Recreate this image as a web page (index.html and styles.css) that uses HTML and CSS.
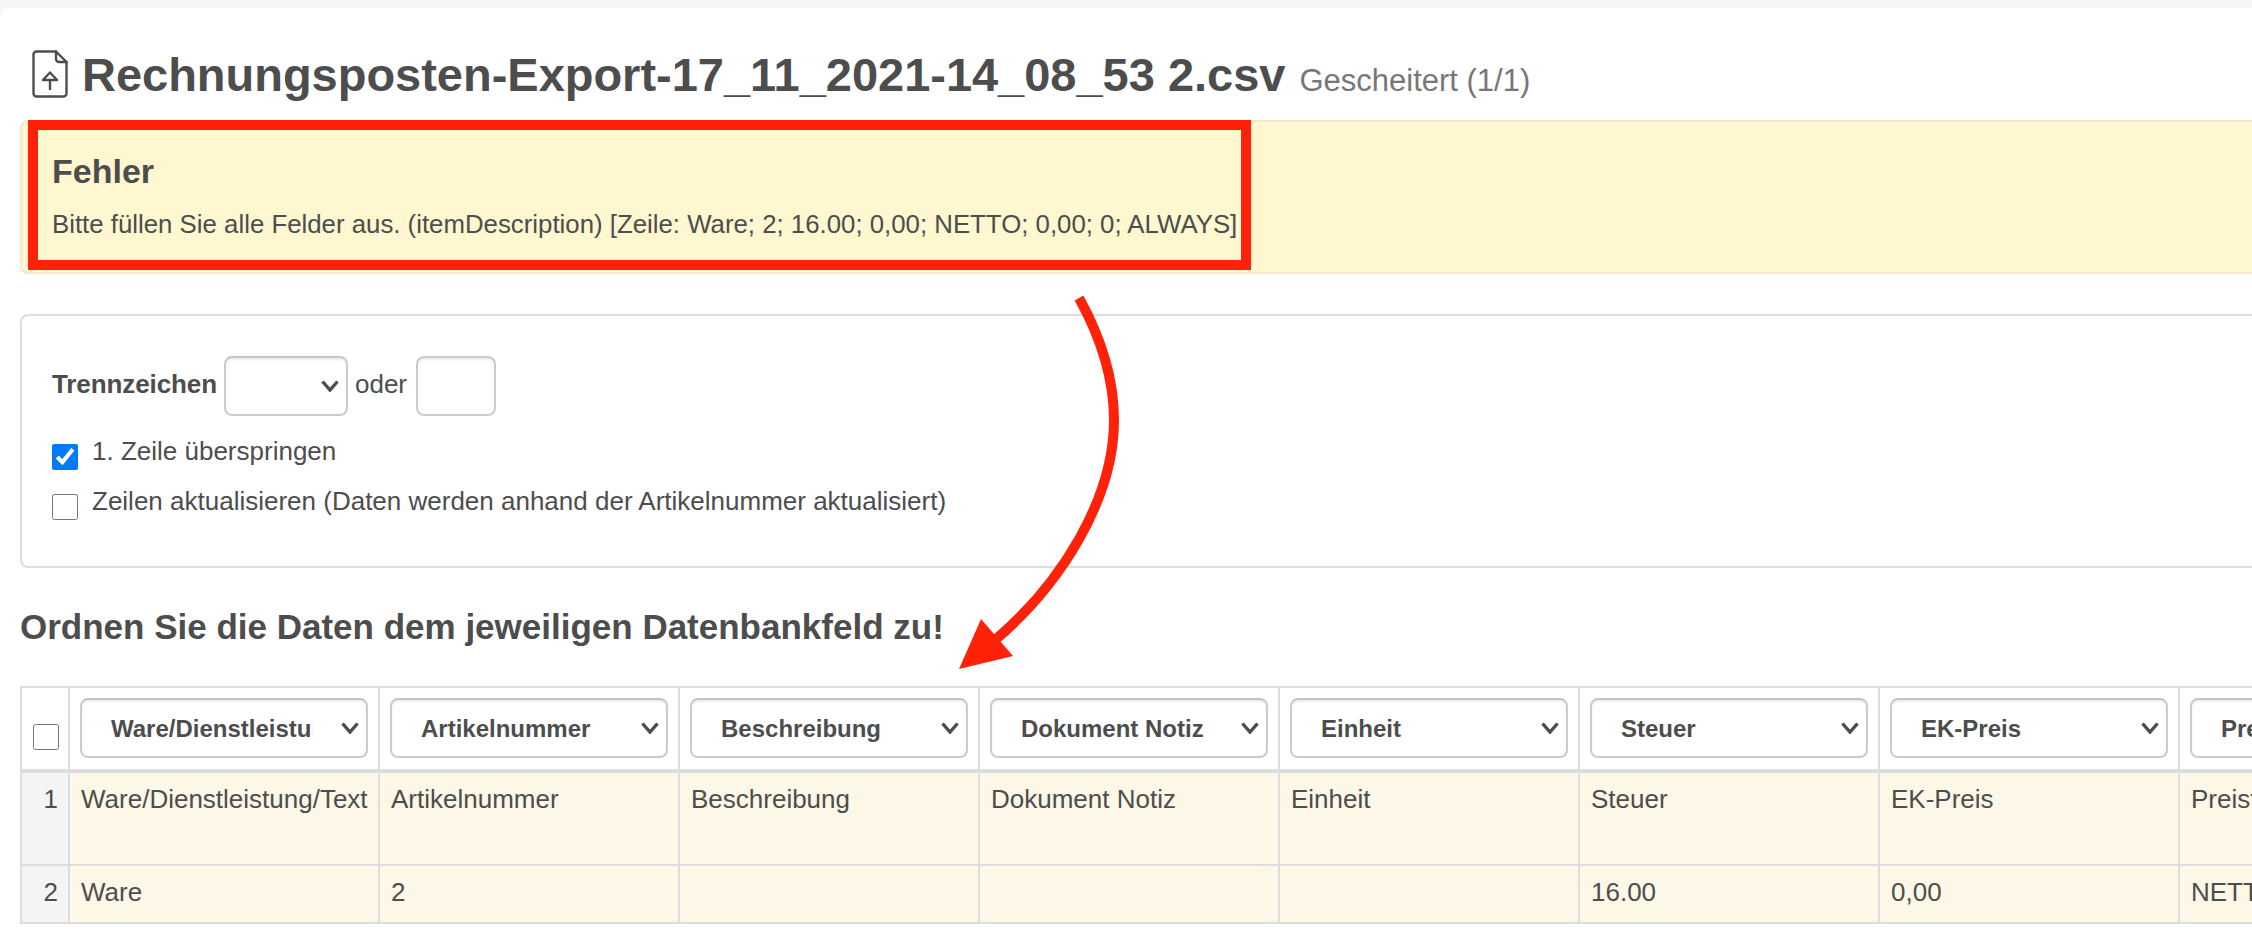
FILE: index.html
```html
<!DOCTYPE html>
<html lang="de">
<head>
<meta charset="utf-8">
<title>Import</title>
<link rel="stylesheet" href="styles.css">
</head>
<body>
<main class="card">
  <header class="title-row">
    <svg class="file-icon" viewBox="0 0 36 48" fill="none" stroke="#4d4d4d" stroke-width="2.4" stroke-linejoin="round" stroke-linecap="round">
      <path d="M24 1.500H4.500a3 3 0 0 0-3 3v39a3 3 0 0 0 3 3h27a3 3 0 0 0 3-3V12z"/>
      <path d="M24 1.500V9a3 3 0 0 0 3 3h7.500"/>
      <path d="M18 39V30M11 30L18 22.500L25 30z"/>
    </svg>
    <h1 class="title">Rechnungsposten-Export-17_11_2021-14_08_53 2.csv</h1>
    <span class="subtitle">Gescheitert (1/1)</span>
  </header>

  <section class="alert">
    <h2 class="alert-title">Fehler</h2>
    <p class="alert-text">Bitte füllen Sie alle Felder aus. (itemDescription) [Zeile: Ware; 2; 16.00; 0,00; NETTO; 0,00; 0; ALWAYS]</p>
  </section>

  <section class="panel">
    <div class="sep-row">
      <label class="sep-label">Trennzeichen</label>
      <div class="select-wrap sep-select">
        <select class="select"><option></option></select>
        <svg class="chev" viewBox="0 0 18 12"><path d="M1.500 1.500L9 10l7.500-8.500"/></svg>
      </div>
      <span>oder</span>
      <input class="sep-input" type="text">
    </div>
    <label class="check-row first"><input class="check" type="checkbox" checked><span>1. Zeile überspringen</span></label>
    <label class="check-row second"><input class="check" type="checkbox"><span>Zeilen aktualisieren (Daten werden anhand der Artikelnummer aktualisiert)</span></label>
  </section>

  <h2 class="map-title">Ordnen Sie die Daten dem jeweiligen Datenbankfeld zu!</h2>

  <table class="grid">
    <colgroup>
      <col class="c-num"><col class="c-first"><col class="c-std"><col class="c-std"><col class="c-std"><col class="c-std"><col class="c-std"><col class="c-std"><col class="c-std">
    </colgroup>
    <thead>
      <tr>
        <th class="head-check"><input class="check" type="checkbox"></th>
        <th><div class="select-wrap"><select class="select"><option>Ware/Dienstleistung/Text</option></select><svg class="chev" viewBox="0 0 18 12"><path d="M1.500 1.500L9 10l7.500-8.500"/></svg></div></th>
        <th><div class="select-wrap"><select class="select"><option>Artikelnummer</option></select><svg class="chev" viewBox="0 0 18 12"><path d="M1.500 1.500L9 10l7.500-8.500"/></svg></div></th>
        <th><div class="select-wrap"><select class="select"><option>Beschreibung</option></select><svg class="chev" viewBox="0 0 18 12"><path d="M1.500 1.500L9 10l7.500-8.500"/></svg></div></th>
        <th><div class="select-wrap"><select class="select"><option>Dokument Notiz</option></select><svg class="chev" viewBox="0 0 18 12"><path d="M1.500 1.500L9 10l7.500-8.500"/></svg></div></th>
        <th><div class="select-wrap"><select class="select"><option>Einheit</option></select><svg class="chev" viewBox="0 0 18 12"><path d="M1.500 1.500L9 10l7.500-8.500"/></svg></div></th>
        <th><div class="select-wrap"><select class="select"><option>Steuer</option></select><svg class="chev" viewBox="0 0 18 12"><path d="M1.500 1.500L9 10l7.500-8.500"/></svg></div></th>
        <th><div class="select-wrap"><select class="select"><option>EK-Preis</option></select><svg class="chev" viewBox="0 0 18 12"><path d="M1.500 1.500L9 10l7.500-8.500"/></svg></div></th>
        <th><div class="select-wrap"><select class="select"><option>Preistyp</option></select><svg class="chev" viewBox="0 0 18 12"><path d="M1.500 1.500L9 10l7.500-8.500"/></svg></div></th>
      </tr>
    </thead>
    <tbody>
      <tr class="row-one">
        <td class="num">1</td><td>Ware/Dienstleistung/Text</td><td>Artikelnummer</td><td>Beschreibung</td><td>Dokument Notiz</td><td>Einheit</td><td>Steuer</td><td>EK-Preis</td><td>Preistyp</td>
      </tr>
      <tr class="row-two">
        <td class="num">2</td><td>Ware</td><td>2</td><td></td><td></td><td></td><td>16.00</td><td>0,00</td><td>NETTO</td>
      </tr>
    </tbody>
  </table>

  <svg class="callout" viewBox="0 0 2252 946" fill="none">
    <rect x="33" y="125" width="1213" height="140" stroke="#ff2108" stroke-width="10"/>
    <path d="M1079 298C1105 345 1114 385 1114 420C1114 500 1060 585 995 640" stroke="#ff2108" stroke-width="10"/>
    <path d="M959 669L981 619L1013 656Z" fill="#ff2108"/>
  </svg>
</main>
</body>
</html>
```
FILE: styles.css
```css
* { box-sizing: border-box; }
html, body { margin: 0; height: 100%; overflow: hidden; }
body {
  background: #f5f5f5;
  padding-top: 8px;
  color: #4d4d4d;
  font-family: "Liberation Sans", Arial, sans-serif;
  font-size: 26px;
}
.card {
  position: relative;
  width: 2252px;
  height: 938px;
  padding: 0 0 0 20px;
  background: #fff;
  border-radius: 10px 0 0 0;
  overflow: hidden;
}
.title-row { display: flex; align-items: baseline; height: 112px; padding: 0 0 0 12px; }
.file-icon { width: 36px; height: 48px; align-self: flex-start; margin: 42px 14px 0 0; flex: none; }
.title { margin: 39px 14px 0 0; font-size: 47px; line-height: 56px; font-weight: 700; white-space: nowrap; letter-spacing: -.02px; }
.subtitle { font-size: 31px; color: #777; white-space: nowrap; }

.alert {
  width: 2400px;
  height: 154px;
  padding: 29px 0 0 30px;
  background: #fef7d0;
  border: 2px solid #fae6cf;
  border-radius: 8px;
}
.alert-title { margin: 0; font-size: 34px; line-height: 40px; font-weight: 700; }
.alert-text { margin: 18px 0 0; font-size: 25.8px; line-height: 30px; white-space: nowrap; }

.panel {
  width: 2400px;
  height: 254px;
  margin-top: 40px;
  padding: 40px 0 0 30px;
  border: 2px solid #ddd;
  border-radius: 8px;
}
.sep-row { display: flex; align-items: center; height: 60px; gap: 7px; }
.sep-label { font-weight: 700; margin-top: -3px; letter-spacing: -.1px; }
.sep-row > span { margin: -3px 2px 0 0; }
.select-wrap { position: relative; width: 100%; height: 60px; }
.sep-select { width: 124px; flex: none; }
.select {
  display: block;
  width: 100%;
  height: 60px;
  padding: 0 53px 0 29px;
  appearance: none;
  background: #fff;
  border: 2px solid #ccc;
  border-top-color: #c4c4c4;
  border-radius: 8px;
  box-shadow: inset 0 2px 2px rgba(0,0,0,.08);
  color: #4d4d4d;
  font: 700 24px "Liberation Sans", Arial, sans-serif;
}
.chev { position: absolute; top: 24px; right: 9px; width: 18px; height: 12px; fill: none; stroke: #4d4d4d; stroke-width: 3.4; pointer-events: none; }
.sep-input { width: 80px; height: 60px; border: 2px solid #ccc; border-radius: 8px; box-shadow: inset 0 2px 2px rgba(0,0,0,.08); background: #fff; }

.check-row { display: flex; align-items: flex-start; gap: 14px; }
.check-row span { margin-top: -8px; line-height: 30px; }
.check-row.first { margin-top: 28px; }
.check-row.second { margin-top: 24px; }
.check { width: 26px; height: 26px; margin: 0; flex: none; accent-color: #007aff; }

.map-title { margin: 38px 0 0; font-size: 35px; line-height: 42px; font-weight: 700; white-space: nowrap; }

.grid { width: 2458px; margin-top: 38px; border-collapse: collapse; table-layout: fixed; }
.c-num { width: 48px; }
.c-first { width: 310px; }
.c-std { width: 300px; }
.grid th, .grid td { border: 2px solid #ddd; }
.grid th { height: 84px; padding: 10px; border-bottom-width: 4px; vertical-align: top; font-weight: 700; }
.grid th.head-check { padding: 36px 0 0 11px; vertical-align: top; text-align: left; }
.grid td { padding: 0 10px 0 11px; background: #fcf7e6; white-space: nowrap; vertical-align: top; line-height: 30px; }
.grid td.num { padding: 0 10px 0 0; background: #f4f4f4; text-align: right; }
.row-one td { height: 94px; padding-top: 11px !important; }
.row-two td { height: 58px; padding-top: 11px !important; }

.callout { position: absolute; left: 0; top: -8px; width: 2252px; height: 946px; pointer-events: none; }
```
